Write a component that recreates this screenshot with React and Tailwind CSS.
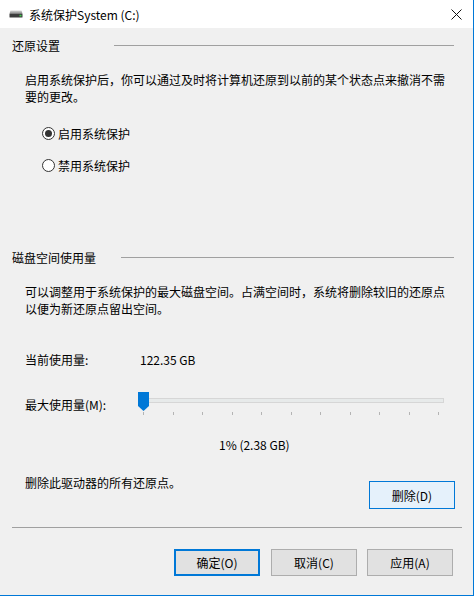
import React from "react";

function Radio({ checked, label }) {
  return (
    <div className="flex items-center h-[17px]">
      <div className="ml-[42px] w-[13px] h-[13px] rounded-full border border-[#333333] bg-white flex items-center justify-center">
        {checked && <div className="w-[7px] h-[7px] rounded-full bg-[#333333]" />}
      </div>
      <span className="ml-[3px]">{label}</span>
    </div>
  );
}

function SectionHeader({ label, lineStart }) {
  return (
    <div className="flex items-center h-[17px] pl-[12px] pr-[19px]">
      <span className="shrink-0" style={{ width: lineStart - 12 }}>{label}</span>
      <div className="flex-1 h-px bg-[#a0a0a0]" />
    </div>
  );
}

function Btn({ children, primary, className = "" }) {
  return (
    <div
      className={
        "w-[86px] h-[27px] flex items-center justify-center bg-[#e1e1e1] " +
        (primary ? "border-2 border-[#0078d7] " : "border border-[#adadad] ") +
        className
      }
    >
      {children}
    </div>
  );
}

export default function App() {
  const ticks = Array.from({ length: 11 }, (_, i) => i);
  return (
    <div
      className="w-[474px] h-[596px] bg-[#f0f0f0] border-r border-b border-[#0078d7] flex flex-col text-[12px] leading-[17px] text-black overflow-hidden"
      style={{ fontFamily: '"Noto Sans CJK SC", "Noto Sans", sans-serif' }}
    >
      {/* Title bar */}
      <div className="h-[28px] bg-white flex items-center shrink-0">
        <svg className="ml-[9px]" width="14" height="8" viewBox="0 0 14 8">
          <defs>
            <linearGradient id="dtop" x1="0" y1="0" x2="0" y2="1">
              <stop offset="0" stopColor="#d8d8d8" />
              <stop offset="1" stopColor="#8a8a8a" />
            </linearGradient>
          </defs>
          <path d="M1.5 0.5 H12.5 L13.5 3.5 H0.5 Z" fill="url(#dtop)" />
          <rect x="0.5" y="3.5" width="13" height="4" rx="0.5" fill="#3c3c3c" />
          <rect x="10.5" y="4.8" width="2" height="1.6" fill="#3fd24a" />
        </svg>
        <span className="ml-[6px]">系统保护System (C:)</span>
        <svg className="ml-auto mr-[11px]" width="11" height="11" viewBox="0 0 11 11">
          <path d="M0.5 0.5 L10.5 10.5 M10.5 0.5 L0.5 10.5" stroke="#111" strokeWidth="1" />
        </svg>
      </div>

      <div className="mt-[9px]">
        <SectionHeader label="还原设置" lineStart={114} />
      </div>

      <div className="mt-[17px] ml-[25px] w-[424px]">
        启用系统保护后，你可以通过及时将计算机还原到以前的某个状态点来撤消不需要的更改。
      </div>

      <div className="mt-[20px]">
        <Radio checked label="启用系统保护" />
      </div>
      <div className="mt-[15px]">
        <Radio label="禁用系统保护" />
      </div>

      <div className="mt-[75px]">
        <SectionHeader label="磁盘空间使用量" lineStart={121} />
      </div>

      <div className="mt-[17px] ml-[25px] w-[424px]">
        可以调整用于系统保护的最大磁盘空间。占满空间时，系统将删除较旧的还原点以便为新还原点留出空间。
      </div>

      <div className="mt-[34px] flex h-[17px]">
        <span className="ml-[25px] w-[115px]">当前使用量:</span>
        <span>122.35 GB</span>
      </div>

      <div className="mt-[24px] flex items-center h-[24px]">
        <span className="ml-[25px] w-[113px]">最大使用量(M):</span>
        <div className="relative w-[306px] h-[24px]">
          <div className="absolute left-[2px] right-0 top-[6px] h-[5px] bg-[#e7eaea] border border-[#d6d6d6]" />
          <svg className="absolute left-0 top-0" width="11" height="19" viewBox="0 0 11 19">
            <path d="M0 0 H11 V14 L5.5 19 L0 14 Z" fill="#0078d7" />
          </svg>
          {ticks.map((i) => (
            <div
              key={i}
              className="absolute top-[20px] w-px h-[3px] bg-[#b4b4b4]"
              style={{ left: 5 + i * 29.5 }}
            />
          ))}
        </div>
      </div>

      <div className="mt-[20px] pl-[219px] h-[17px]">1% (2.38 GB)</div>

      <div className="mt-[21px] flex items-start">
        <span className="ml-[25px]">删除此驱动器的所有还原点。</span>
        <div className="ml-auto mr-[18px] mt-[7px] w-[86px] h-[28px] border border-[#0078d7] bg-[#e5f1fb] flex items-center justify-center">
          删除(D)
        </div>
      </div>

      <div className="mt-[18px] ml-[12px] mr-[11px] h-px bg-[#a0a0a0]" />

      <div className="mt-[21px] flex">
        <Btn primary className="ml-[174px]">确定(O)</Btn>
        <Btn className="ml-[11px]">取消(C)</Btn>
        <Btn className="ml-[10px]">应用(A)</Btn>
      </div>
    </div>
  );
}
